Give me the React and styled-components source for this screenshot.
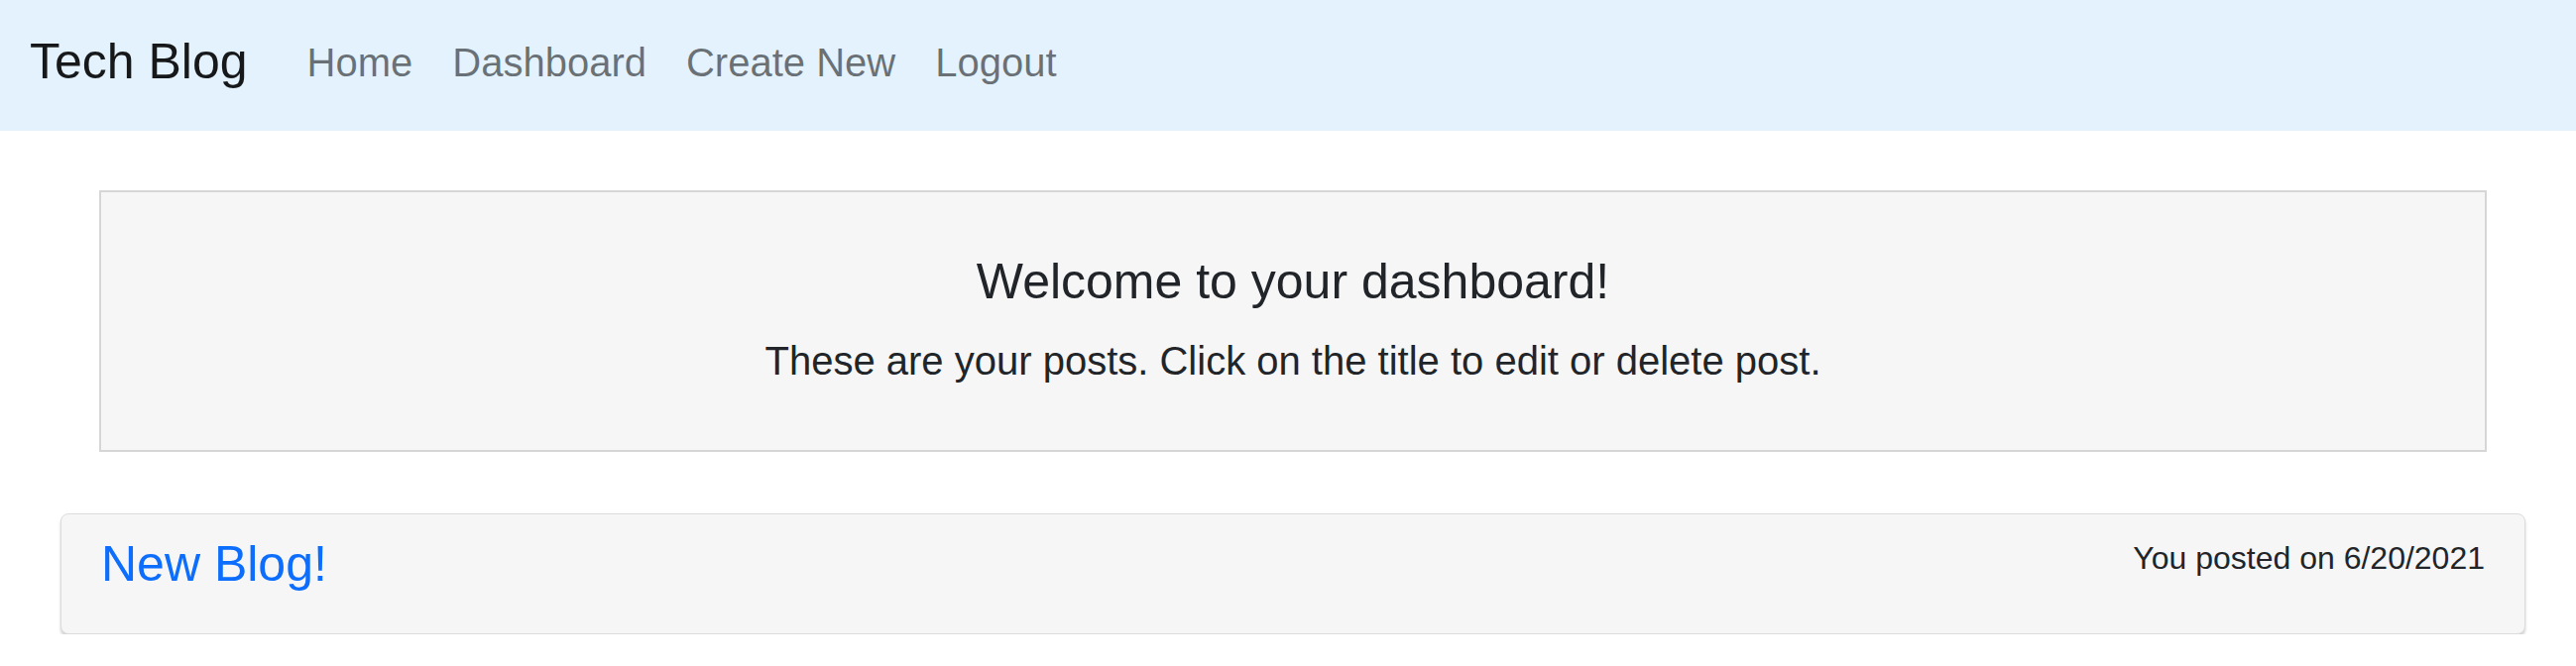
import React from "react";
import styled, { createGlobalStyle } from "styled-components";

const posts = [
  { id: 1, title: "New Blog!", date: "6/20/2021" },
];

const navLinks = ["Home", "Dashboard", "Create New", "Logout"];

function App() {
  return (
    <>
      <GlobalStyle />
      <Navbar>
        <Brand href="#">Tech Blog</Brand>
        <NavList>
          {navLinks.map((link) => (
            <NavItem key={link}>
              <NavLink href="#">{link}</NavLink>
            </NavItem>
          ))}
        </NavList>
      </Navbar>
      <Main>
        <Jumbotron>
          <WelcomeTitle>Welcome to your dashboard!</WelcomeTitle>
          <Lead>These are your posts. Click on the title to edit or delete post.</Lead>
        </Jumbotron>
        {posts.map((post) => (
          <PostCard key={post.id}>
            <PostTitle href="#">{post.title}</PostTitle>
            <PostDate>You posted on {post.date}</PostDate>
          </PostCard>
        ))}
      </Main>
    </>
  );
}

export default App;

const GlobalStyle = createGlobalStyle`
  body {
    margin: 0;
    background: #ffffff;
    color: #212529;
    font-family: "Liberation Sans", Arial, sans-serif;
  }
`;

const Navbar = styled.nav`
  display: flex;
  align-items: center;
  height: 132px;
  box-sizing: border-box;
  padding: 25px 30px 32px;
  background: #e3f2fd;
`;

const Brand = styled.a`
  margin-right: 40px;
  font-size: 50px;
  line-height: 75px;
  color: rgba(0, 0, 0, 0.9);
  text-decoration: none;
`;

const NavList = styled.ul`
  display: flex;
  margin: 0;
  padding: 0;
  list-style: none;
`;

const NavItem = styled.li`
  display: block;
`;

const NavLink = styled.a`
  display: block;
  padding: 0 20px;
  font-size: 40px;
  line-height: 60px;
  color: rgba(0, 0, 0, 0.55);
  text-decoration: none;
`;

const Main = styled.main`
  display: flex;
  flex-direction: column;
  gap: 62px;
  padding: 60px 51px 0 61px;
`;

const Jumbotron = styled.section`
  margin: 0 39px;
  padding: 60px 20px;
  background: #f6f6f6;
  border: 2px solid #d6d6d6;
  text-align: center;
`;

const WelcomeTitle = styled.h3`
  margin: 0 0 20px;
  font-size: 50px;
  font-weight: 400;
  line-height: 1.2;
  color: #212529;
`;

const Lead = styled.p`
  margin: 0;
  font-size: 40px;
  line-height: 1.5;
`;

const PostCard = styled.article`
  display: flex;
  justify-content: space-between;
  align-items: flex-start;
  padding: 20px 40px 40px;
  background: #f6f6f6;
  border: 1px solid #dcdcdc;
  border-radius: 8px;
  box-shadow: 0 3px 3px rgba(0, 0, 0, 0.18);
`;

const PostTitle = styled.a`
  font-size: 50px;
  line-height: 1.2;
  color: #0d6efd;
  text-decoration: none;
`;

const PostDate = styled.span`
  font-size: 32px;
  line-height: 1.5;
  color: #212529;
`;
